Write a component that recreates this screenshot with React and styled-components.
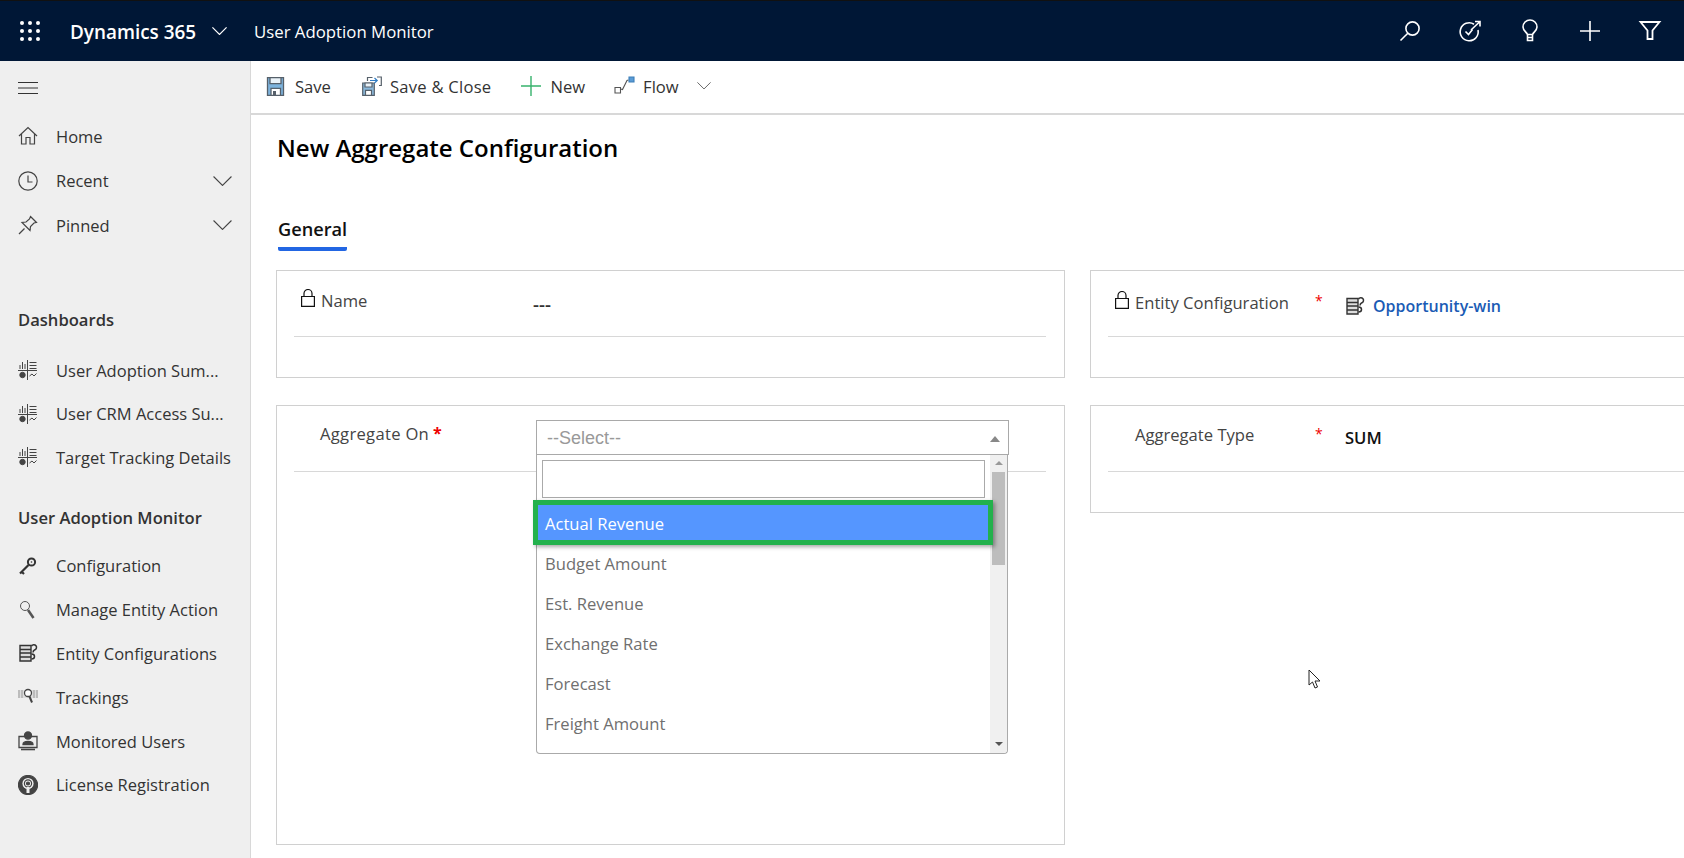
import React from 'react';
import styled, { createGlobalStyle } from 'styled-components';

const FONT = `'Open Sans', 'Noto Sans', sans-serif`;

const GlobalStyle = createGlobalStyle`
  html, body {
    margin: 0;
    height: 100%;
    background: #fff;
    font-family: ${FONT};
    overflow: hidden;
  }
  * { box-sizing: border-box; }
`;

const Page = styled.div`
  width: 1684px;
  height: 858px;
  position: relative;
  display: flex;
  flex-direction: column;
  overflow: hidden;
`;

const TopBar = styled.header`
  height: 61px;
  flex: none;
  display: flex;
  align-items: center;
  background: #001736;
  border-top: 1px solid #111;
  color: #fff;
`;

const Waffle = styled.div`
  width: 20px;
  height: 20px;
  margin-left: 20px;
  display: grid;
  grid-template-columns: repeat(3, 4px);
  grid-auto-rows: 4px;
  gap: 4px;
  span {
    background: #fff;
    border-radius: 50%;
  }
`;

const Brand = styled.div`
  margin: 1px 0 0 30px;
  font-size: 18.9px;
  font-weight: 600;
  width: 142px;
  white-space: nowrap;
`;

const AppName = styled.div`
  margin-left: 27px;
  font-size: 16.8px;
`;

const TopIcons = styled.div`
  margin-left: auto;
  margin-right: 22px;
  display: flex;
  align-items: center;
  gap: 36px;
`;

const Body = styled.div`
  flex: 1;
  display: flex;
  min-height: 0;
`;

const Sidebar = styled.nav`
  width: 251px;
  flex: none;
  background: #efefef;
  border-right: 1px solid #d8d8d8;
  color: #333;
`;

const Burger = styled.div`
  height: 53px;
  display: flex;
  align-items: center;
  padding-left: 18px;
`;

const NavRow = styled.div`
  height: ${p => p.$h || 44.5}px;
  display: flex;
  align-items: center;
  padding: 0 18px;
  font-size: 16.5px;
  white-space: nowrap;
  svg.lead {
    flex: none;
    margin-right: 18px;
  }
  svg.tail {
    margin-left: auto;
  }
`;

const NavHeading = styled.div`
  height: 44px;
  margin-top: ${p => p.$top}px;
  margin-bottom: ${p => p.$bottom}px;
  padding-left: 18px;
  display: flex;
  align-items: center;
  font-size: 16.6px;
  font-weight: 600;
  color: #333;
`;

const Main = styled.main`
  flex: 1;
  min-width: 0;
  display: flex;
  flex-direction: column;
`;

const Toolbar = styled.div`
  height: 54px;
  flex: none;
  display: flex;
  align-items: center;
  padding: 0 0 2px 15px;
  border-bottom: 2px solid #d8d8d8;
`;

const ToolButton = styled.div`
  display: flex;
  align-items: center;
  gap: ${p => p.$gap || 10}px;
  margin-right: ${p => p.$right || 30}px;
  font-size: 16.6px;
  letter-spacing: ${p => p.$track || 0}px;
  color: #333;
  white-space: nowrap;
`;

const Content = styled.div`
  flex: 1;
  padding: 0 0 0 25px;
  overflow: hidden;
`;

const Title = styled.h1`
  margin: 15px 0 0 1px;
  height: 36px;
  line-height: 36px;
  font-size: 24px;
  font-weight: 600;
  color: #000;
  white-space: nowrap;
`;

const Tab = styled.div`
  display: inline-block;
  margin: 48px 0 0 2px;
  height: 37px;
  line-height: 30px;
  font-size: 18.2px;
  font-weight: 600;
  color: #111;
  border-bottom: 4px solid #2266e3;
  border-radius: 0 0 2px 2px;
`;

const Columns = styled.div`
  margin-top: 19px;
  display: grid;
  grid-template-columns: 789px 800px;
  column-gap: 25px;
  align-items: start;
`;

const Column = styled.div`
  display: flex;
  flex-direction: column;
  gap: 27px;
`;

const Panel = styled.section`
  height: ${p => p.$h}px;
  border: 1px solid #d0d0d0;
  padding: 0 18px 0 17px;
`;

const Row = styled.div`
  height: 66px;
  display: grid;
  grid-template-columns: ${p => p.$cols};
  border-bottom: 1px solid #d8d8d8;
  margin-right: ${p => (p.$bleed ? '-40px' : 0)};
`;

const Label = styled.div`
  display: flex;
  align-items: flex-start;
  padding: ${p => p.$top || 17}px 0 0 ${p => p.$indent || 0}px;
  gap: ${p => p.$gap || 6}px;
  font-size: 16.6px;
  letter-spacing: ${p => p.$track || 0}px;
  line-height: 23px;
  color: #444;
  white-space: nowrap;
`;

const Star = styled.span`
  color: #e00;
  font-size: ${p => (p.$bold ? 16 : 14)}px;
  font-weight: ${p => (p.$bold ? 700 : 400)};
`;

const Value = styled.div`
  display: flex;
  align-items: center;
  gap: 8px;
  padding-top: ${p => p.$top}px;
  height: 40px;
  font-size: ${p => p.$size || 16.6}px;
  font-weight: 600;
  color: ${p => (p.$link ? '#1a5bb5' : '#111')};
`;

const Dashes = styled(Value)`
  margin-left: -3px;
  color: #333;
`;

const SelectCell = styled.div`
  position: relative;
  padding-top: 14px;
`;

const SelectBox = styled.div`
  width: 473px;
  height: 35px;
  border: 1px solid #a9a9a9;
  display: flex;
  align-items: center;
  justify-content: space-between;
  padding: 2px 8px 0 10px;
  font-family: 'Liberation Sans', Arial, sans-serif;
  font-size: 18px;
  color: #999;
`;

const UpArrow = styled.span`
  width: 0;
  height: 0;
  border-left: 5px solid transparent;
  border-right: 5px solid transparent;
  border-bottom: 6px solid #888;
`;

const DropList = styled.div`
  position: absolute;
  top: 49px;
  left: 0;
  width: 472px;
  height: 299px;
  display: flex;
  background: #fff;
  border: 1px solid #aaa;
  border-top: none;
  border-radius: 0 0 4px 4px;
  z-index: 2;
`;

const ListBody = styled.div`
  flex: 1;
  min-width: 0;
`;

const SearchBox = styled.div`
  height: 38px;
  margin: 5px 5px 2px 5px;
  border: 1px solid #aaa;
  background: #fff;
`;

const Option = styled.div`
  height: 40px;
  padding-left: 8px;
  display: flex;
  align-items: center;
  font-size: 16.6px;
  color: #6f6f6f;
`;

const ActiveOption = styled(Option)`
  height: 45px;
  margin: 0 -3px -2px -4px;
  padding: 1px 0 0 7px;
  background: #5596ff;
  border: 5px solid #22b14c;
  color: #fff;
  position: relative;
  z-index: 1;
  box-shadow: 2px 2px 4px rgba(0, 0, 0, 0.35);
`;

const ScrollTrack = styled.div`
  width: 17px;
  flex: none;
  background: #f0f0f0;
  display: flex;
  flex-direction: column;
  align-items: center;
  padding-top: 6px;
  border-radius: 0 0 4px 0;
`;

const ScrollThumb = styled.div`
  width: 13px;
  height: 93px;
  margin-top: 7px;
  background: #bdbdbd;
`;

const ScrollDown = styled.span`
  margin-top: auto;
  margin-bottom: 7px;
  width: 0;
  height: 0;
  border-left: 4px solid transparent;
  border-right: 4px solid transparent;
  border-top: 4px solid #555;
`;

const ScrollUp = styled.span`
  width: 0;
  height: 0;
  border-left: 4px solid transparent;
  border-right: 4px solid transparent;
  border-bottom: 4px solid #999;
`;

const Pointer = styled.svg`
  position: absolute;
  left: 1308px;
  top: 669px;
`;

const Icon = ({ w = 20, h = 20, vb, className, children, stroke = '#444', sw = 1.2, fill = 'none' }) => (
  <svg className={className} width={w} height={h} viewBox={vb || `0 0 ${w} ${h}`} fill={fill} stroke={stroke} strokeWidth={sw}>
    {children}
  </svg>
);

const Chevron = ({ w = 19, color = '#444', className, sw = 1.1 }) => (
  <svg className={className} width={w} height={w * 0.55} viewBox="0 0 19 10.5" fill="none" stroke={color} strokeWidth={sw}>
    <path d="M.5.5l9 9 9-9" />
  </svg>
);

const SearchIcon = () => (
  <Icon w={24} h={24} stroke="#fff" sw={1.6}>
    <circle cx="14.5" cy="9.5" r="6.6" />
    <path d="M9.8 14.2L2.5 21.5" />
  </Icon>
);
const TaskIcon = () => (
  <Icon w={24} h={24} stroke="#fff" sw={1.6}>
    <path d="M16 5.2A9 9 0 1 0 20 11" />
    <path d="M7.5 12.5l3 3 4-5M13 11l9-8.5M17 2.5h5v5" />
  </Icon>
);
const BulbIcon = () => (
  <Icon w={24} h={24} stroke="#fff" sw={1.6}>
    <path d="M9.5 15.5C8.5 13 5 11.5 5 8a7 7 0 0 1 14 0c0 3.5-3.5 5-4.5 7.5z" />
    <path d="M9.5 15.5v6h5v-6M9.5 18.5h5" />
  </Icon>
);
const PlusIcon = ({ w = 22, color = '#fff', sw = 1.6 }) => (
  <Icon w={w} h={w} vb={`${(22 - w) / 2} ${(22 - w) / 2} ${w} ${w}`} stroke={color} sw={sw}>
    <path d="M11 1v20M1 11h20" />
  </Icon>
);
const FilterIcon = () => (
  <Icon w={24} h={24} stroke="#fff" sw={1.8}>
    <path d="M2.5 3h19l-7 8.5V20h-5v-8.5z" />
  </Icon>
);

const SaveIcon = () => (
  <Icon w={19} h={19} stroke="#56606a" sw={1.3}>
    <path d="M1.5.7h16v17.6h-16z" fill="#7db3dd" />
    <path d="M4 .7h11v6H4z" fill="#eaf2f8" />
    <path d="M5 18.3v-7h9.5v7z" fill="#fff" />
    <path d="M7 14h3v4.3H7z" fill="#56606a" stroke="none" />
  </Icon>
);
const SaveCloseIcon = () => (
  <Icon w={20} h={20} stroke="#56606a" sw={1.2}>
    <path d="M.7 7h11.6v12.3H.7z" fill="#8bb9dc" />
    <path d="M3 7h7v4H3z" fill="#eaf2f8" />
    <path d="M3.5 19.3v-5h6v5z" fill="#fff" />
    <path d="M5.5 5V1.5h5M15 1h4.3v8.500H17" />
    <path d="M8 4.5h7M12.5 2l2.7 2.500L12.5 7" stroke="#2f7cc4" />
  </Icon>
);
const FlowIcon = () => (
  <Icon w={21} h={20} stroke="#555" sw={1.1}>
    <path d="M1 11.5h5.500V17H1z" />
    <path d="M6.5 13l2 .5L13 4.5l1.5-.5" />
    <path d="M15 1h5v5h-5z" fill="#5a9bd5" stroke="#3d7fb8" />
  </Icon>
);

const HomeIcon = () => (
  <Icon className="lead" stroke="#444">
    <path d="M1 10l9-8.5 9 8.5M3.5 8v10H8v-6.5h4V18h4.5V8" />
  </Icon>
);
const ClockIcon = () => (
  <Icon className="lead" stroke="#444">
    <circle cx="10" cy="10" r="9.2" />
    <path d="M10 4.5V11h4.5" />
  </Icon>
);
const PinIcon = () => (
  <Icon className="lead" stroke="#444">
    <path d="M12.5 1.5l6 6-2.5.5-3.5 3.5-.5 4L8 11.5l-4-4 4-.5L11.5 4z" />
    <path d="M6.5 13.5L1 19" />
  </Icon>
);
const DashIcon = () => (
  <Icon className="lead" stroke="#444" sw={1}>
    <path d="M9.5 0v20M0 10.5h19" />
    <path d="M2 9V5M4.5 9V2M7 9V4M11.5 2.5h7M11.5 5.5h7M11.5 8.5h7" />
    <circle cx="4.500" cy="15" r="2.700" fill="#444" />
    <path d="M11.5 16l2.5-2 2 2 2.5-2.500" />
  </Icon>
);
const KeyIcon = () => (
  <Icon className="lead" stroke="#333" sw={2}>
    <circle cx="13.5" cy="6" r="3.6" />
    <circle cx="13.5" cy="6" r="0.8" fill="#333" stroke="none" />
    <path d="M10.5 9L2 17.5M3.5 15.5l2.500 2.500" strokeWidth="2.200" />
  </Icon>
);
const MagnifierIcon = () => (
  <Icon className="lead" stroke="#555" sw={1}>
    <circle cx="7" cy="6" r="4.5" />
    <path d="M10 10l5.5 8" strokeWidth="2.600" />
  </Icon>
);
const ClipboardIcon = () => (
  <Icon className="lead" stroke="#333" sw={1.4}>
    <path d="M2 2.5h11V18H2z" fill="#ddd" />
    <path d="M2 6.5h11M2 10h11M2 14h11" strokeWidth="1.600" />
    <path d="M13.5 3a2.700 2.700 0 1 1 3 4c-1 .5-1.500 1-1.500 2.500M13.500 11c4 0 4 5 0 5" strokeWidth="1.500" />
  </Icon>
);
const TrackingIcon = () => (
  <Icon className="lead" stroke="#888" sw={1.3}>
    <path d="M1 3v8M4 3v8M16 3v8M19 3v8" />
    <path d="M0 3h20v8H0z" fill="#ccc" stroke="none" opacity="0.5" />
    <circle cx="10" cy="6" r="3.500" fill="#fff" stroke="#444" />
    <path d="M11.5 9.5l2.500 6" stroke="#444" strokeWidth="2" />
  </Icon>
);
const UsersIcon = () => (
  <Icon className="lead" stroke="#444" sw={1.3}>
    <path d="M1 5.5h18v11H1z" />
    <circle cx="10" cy="4.500" r="3.500" fill="#444" />
    <path d="M5 13.5c0-4 10-4 10 0z" fill="#444" />
    <path d="M3 18.5h14" strokeWidth="1.600" />
  </Icon>
);
const LicenseIcon = () => (
  <Icon className="lead" stroke="#444" sw={1.2}>
    <path d="M10 .5a9.500 9.500 0 1 0 .01 0z" fill="#444" />
    <circle cx="10" cy="8.500" r="5.600" fill="#efefef" stroke="none" />
    <circle cx="10" cy="8.500" r="3.600" />
    <circle cx="10" cy="8.500" r="1.500" fill="#444" />
    <path d="M8.5 12h3v6h-3z" fill="#efefef" stroke="none" />
  </Icon>
);
const LockIcon = () => (
  <svg width="14" height="18" viewBox="0 0 14 18" fill="none" stroke="#111" strokeWidth="1.2" style={{ flex: 'none' }}>
    <path d="M.6 7.5h12.800v9.900H.6z" />
    <path d="M3 7.5v-3a4 4 0 0 1 8 0v3" />
  </svg>
);

const NAV_TOP = [
  { label: 'Home', icon: <HomeIcon /> },
  { label: 'Recent', icon: <ClockIcon />, tail: true },
  { label: 'Pinned', icon: <PinIcon />, tail: true },
];
const NAV_DASH = ['User Adoption Sum...', 'User CRM Access Su...', 'Target Tracking Details'];
const NAV_MONITOR = [
  { label: 'Configuration', icon: <KeyIcon /> },
  { label: 'Manage Entity Action', icon: <MagnifierIcon /> },
  { label: 'Entity Configurations', icon: <ClipboardIcon /> },
  { label: 'Trackings', icon: <TrackingIcon /> },
  { label: 'Monitored Users', icon: <UsersIcon /> },
  { label: 'License Registration', icon: <LicenseIcon /> },
];
const OPTIONS = ['Budget Amount', 'Est. Revenue', 'Exchange Rate', 'Forecast', 'Freight Amount'];

export default function App() {
  return (
    <Page>
      <GlobalStyle />
      <TopBar>
        <Waffle>{Array.from({ length: 9 }, (_, i) => <span key={i} />)}</Waffle>
        <Brand>Dynamics 365</Brand>
        <Chevron w={15} color="#fff" sw={1.5} />
        <AppName>User Adoption Monitor</AppName>
        <TopIcons>
          <SearchIcon />
          <TaskIcon />
          <BulbIcon />
          <PlusIcon w={24} />
          <FilterIcon />
        </TopIcons>
      </TopBar>
      <Body>
        <Sidebar>
          <Burger>
            <Icon w={20} h={12} stroke="#333" sw={1}>
              <path d="M0 .5h20M0 6h20M0 11.5h20" />
            </Icon>
          </Burger>
          {NAV_TOP.map(item => (
            <NavRow key={item.label}>
              {item.icon}
              {item.label}
              {item.tail && <Chevron className="tail" />}
            </NavRow>
          ))}
          <NavHeading $top={50} $bottom={7}>Dashboards</NavHeading>
          {NAV_DASH.map(label => (
            <NavRow key={label} $h={43.5}><DashIcon />{label}</NavRow>
          ))}
          <NavHeading $top={16} $bottom={5}>User Adoption Monitor</NavHeading>
          {NAV_MONITOR.map(item => (
            <NavRow key={item.label} $h={43.8}>{item.icon}{item.label}</NavRow>
          ))}
        </Sidebar>
        <Main>
          <Toolbar>
            <ToolButton $right={31}><SaveIcon />Save</ToolButton>
            <ToolButton $gap={8} $right={29} $track={0.25}><SaveCloseIcon />Save &amp; Close</ToolButton>
            <ToolButton $gap={8} $right={29}><PlusIcon color="#37b26c" sw={1.4} />New</ToolButton>
            <ToolButton $gap={8} $right={18}><FlowIcon />Flow</ToolButton>
            <Chevron w={14} />
          </Toolbar>
          <Content>
            <Title>New Aggregate Configuration</Title>
            <Tab>General</Tab>
            <Columns>
              <Column>
                <Panel $h={108}>
                  <Row $cols="242px 1fr">
                    <Label $indent={7} $top={18}><LockIcon />Name</Label>
                    <Dashes $top={24} $size={18.5}>---</Dashes>
                  </Row>
                </Panel>
                <Panel $h={440}>
                  <Row $cols="242px 1fr">
                    <Label $indent={26} $top={16} $gap={4} $track={0.3}>Aggregate On <Star $bold>*</Star></Label>
                    <SelectCell>
                      <SelectBox>--Select--<UpArrow /></SelectBox>
                      <DropList>
                        <ListBody>
                          <SearchBox />
                          <ActiveOption>Actual Revenue</ActiveOption>
                          {OPTIONS.map(o => <Option key={o}>{o}</Option>)}
                        </ListBody>
                        <ScrollTrack>
                          <ScrollUp />
                          <ScrollThumb />
                          <ScrollDown />
                        </ScrollTrack>
                      </DropList>
                    </SelectCell>
                  </Row>
                </Panel>
              </Column>
              <Column>
                <Panel $h={108}>
                  <Row $cols="207px 30px 1fr" $bleed>
                    <Label $indent={7} $top={20}><LockIcon />Entity Configuration</Label>
                    <Label $top={18}><Star>*</Star></Label>
                    <Value $top={30} $size={16} $link><ClipboardIcon />Opportunity-win</Value>
                  </Row>
                </Panel>
                <Panel $h={108}>
                  <Row $cols="207px 30px 1fr" $bleed>
                    <Label $indent={27} $top={17}>Aggregate Type</Label>
                    <Label $top={16}><Star>*</Star></Label>
                    <Value $top={22}>SUM</Value>
                  </Row>
                </Panel>
              </Column>
            </Columns>
          </Content>
        </Main>
      </Body>
      <Pointer width="14" height="22" viewBox="0 0 14 22" fill="#fff" stroke="#222" strokeWidth="1">
        <path d="M1 1v15l3.5-3 2.5 6 2.500-1-2.500-6h5z" />
      </Pointer>
    </Page>
  );
}
